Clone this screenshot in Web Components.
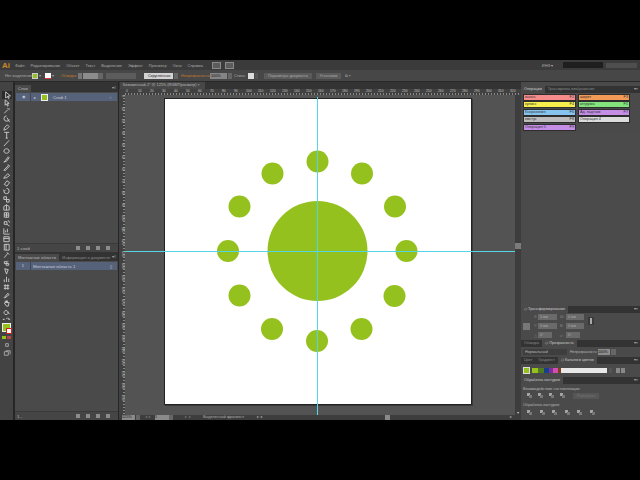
<!doctype html>
<html><head><meta charset="utf-8"><style>
html,body{margin:0;padding:0;background:#000;width:640px;height:480px;overflow:hidden}
body{font:5px "Liberation Sans",sans-serif;color:#bbb}
</style></head><body>
<ai-app></ai-app>
<script>
const def=(n,html,init)=>customElements.define(n,class extends HTMLElement{connectedCallback(){if(this.shadowRoot)return;const s=this.attachShadow({mode:'open'});s.innerHTML=typeof html==='function'?html(this):html;init&&init(s,this)}});
const tools=[
'M3 1v7l2-2 1 2.500 1-.5-1-2.500h2.500z','M3 1v6l1.500-1.500 1 2.500 1-.5-1-2.500h2z','M2 7l4-4M6 1v1M8 3h-1M7.500 1.500l-1 1','M4.500 1a3 3 0 1 0 3 4M5 3l3 5','M1.500 8l1-3 3-3 2 2-3 3z','M2 1.500h5.500M4.700 1.500v6.500M3.500 8h2.500','M1.500 8l6-6.500','M4.500 2a3 2.500 0 1 0 .1 0z','M1.500 8l2-2 3-4 1 1-3 4z','M1.500 8l5-5 1 1-5 5zM6 1.500l2 2','M2 7l4-4 2 2-4 3zM1 8h2','M2 6l3-4 3 2-3 4z','M4.500 1.500a3 3 0 1 1-3 3M1 3l1 1.500 1.500-1','M1.500 2h3v3h-3zM4.500 5h3v3h-3z','M1.500 8v-4l3-2 3 2v4zM4.500 2v6','M2 2h5v5h-5zM2 4.500h5M4.500 2v5','M2 3h3v3h-3zM5 6l3 2M6 2a2 2 0 0 1 2 2','M1.500 1.500v6.500h6.500M3.500 6v-2M5.500 6v-4','M1.500 2h6v5.500h-6zM1.500 4h6',
'M2 1.500h5.500v6.500h-5.500zM4 1.500v6.500','M2 7.500l4-5M5 1.500l2.500 2.500','M2 3h3v2h-3zM4 5h3v2h-3zM6 2v1',
'M2.500 2l4 1-2 5z','M2 8v-3M4.500 8v-6M7 8v-4','M1.500 3h6M1.500 6h6M3 1.500v6M6 1.500v6','M2 7.500l4-5 1.500 1.500-5 4z','M3 4v-1.500h1.500v1M4.500 3v-1h1v2M2 4.500l2.500 3.500h2l1-4h-5','M4 4a2.300 2.300 0 1 0 .1 0zM5.500 5.500l2.500 2.500'];
const paths=tools.map((d,i)=>`<svg class="${i==0?'sel':''}" viewBox="0 0 9 9" width="9" height="8" fill="none" stroke="#d0d0d0" stroke-width="1"><path d="${d}"/></svg>`).join('');

def('ai-menubar',`<style>:host{display:flex;align-items:center;height:10px;background:#3b3b3b;padding-left:2px;flex:none}
b{font:bold 8px "Liberation Sans";color:#c98a23;width:13px}
span{color:#aaa;font-size:3.900px;margin-right:6px;white-space:nowrap}
.ic{width:9px;height:7px;background:#5c5c5c;border:1px solid #8a8a8a;box-sizing:border-box;margin-right:4px}
.sp{flex:1}.q{width:40px;height:6px;background:#1e1e1e;margin:0 3px 0 9px}
.w{width:10.500px;height:5px;background:#4e4e4e}
</style><b>Ai</b><span>Файл</span><span>Редактирование</span><span>Объект</span><span>Текст</span><span>Выделение</span><span>Эффект</span><span>Просмотр</span><span>Окно</span><span>Справка</span>
<div class="ic" style="margin-left:3px"></div><div class="ic"></div><div class="sp"></div><span style="margin:0">ИНФ ▾</span><div class="q"></div><div class="w"></div><div class="w"></div><div class="w" style="margin-right:3px"></div>`);

def('ai-controlbar',`<style>:host{display:flex;align-items:center;height:12px;background:#474747;border-bottom:1px solid #2a2a2a;padding-left:5px;flex:none;box-sizing:border-box;white-space:nowrap;font-size:3.800px;color:#aaa}
i{display:block;height:6px;flex:none;font-style:normal;line-height:6px}
span{flex:none}
.o{color:#c47a2a}</style>
<span style="width:27px">Нет выделения</span><i style="width:6px;background:#95c11f;border:.5px solid #ccc;box-sizing:border-box"></i><span style="width:7px;padding-left:1px;box-sizing:border-box">▾</span>
<i style="width:6px;background:#fff;border-bottom:1px solid #d33;box-sizing:border-box"></i><span style="width:10px;padding-left:1px;box-sizing:border-box">▾</span>
<span class="o" style="width:17px">Обводка:</span><i style="width:4px;background:#777;margin-right:1px"></i><i style="width:15px;background:#8c8c8c"></i><i style="width:5px;background:#666;margin-right:3px"></i>
<i style="width:30px;background:#5c5c5c;margin-right:8px"></i>
<i style="width:29px;background:#d4d4d4;color:#222;padding-left:4px;box-sizing:border-box">Скруглённая</i><i style="width:4px;background:#666;margin:0 3px 0 1px"></i>
<span class="o" style="width:29px">Непрозрачность:</span><i style="width:17px;background:#858585;color:#111;padding-left:1px;box-sizing:border-box">100%</i><i style="width:4px;background:#666;margin:0 2px 0 1px"></i>
<span style="width:14px">Стиль:</span><i style="width:6px;background:#ddd"></i><i style="width:3px;background:#555;margin:0 6px 0 1px"></i>
<i style="width:48px;background:#5a5a5a;text-align:center;margin-right:4px">Параметры документа</i>
<i style="width:25px;background:#5a5a5a;text-align:center;margin-right:4px">Установки</i>
<span>⧉ ▾</span>`);

def('ai-toolbar',`<style>:host{display:flex;flex-direction:column;align-items:center;width:13px;flex:none;background:#434343;border-right:2px solid #262626;padding-top:9px}
.t{display:grid;grid-auto-rows:8px;justify-items:center;align-items:center}
.sel{background:#2b2b2b;width:10px}
.c{position:relative;width:11px;height:12px;margin-top:1px}
.f{position:absolute;left:1px;top:0;width:7px;height:7px;background:#95c11f;border:.5px solid #eee}
.s{position:absolute;left:5px;top:5px;width:6px;height:6px;background:#fff;border:1px solid #c22;box-sizing:border-box}
.m{display:flex;gap:1px;margin-top:1px}.m i{display:block;width:4px;height:3px;background:#95c11f}.m i+i{background:#b44}
</style><div class="t" id="t">${paths}</div>
<div class="t" style="grid-auto-rows:7px;color:#ddd;font-size:5px"><span>▪ ↷</span></div>
<div class="c"><div class="f"></div><div class="s"></div></div><div class="m"><i></i><i></i></div>
<div class="t" style="margin-top:2px">${`<svg viewBox="0 0 9 9" width="8" height="8" fill="none" stroke="#c4c4c4" stroke-width=".8"><path d="M3 3h3v3h-3z"/></svg><svg viewBox="0 0 9 9" width="8" height="8" fill="none" stroke="#c4c4c4" stroke-width=".8"><path d="M1.500 3h4.500v4h-4.500zM3 2h5v4"/></svg>`}</div>`);

def('ai-panel',h=>`<style>:host{display:flex;flex-direction:column;min-height:0;background:#4a4a4a}
.tabs{display:flex;height:9px;background:#333;flex:none;align-items:flex-end;font-size:4px;color:#8c8c8c;position:relative;white-space:nowrap}
.tabs span{padding:0 3px;height:7px;line-height:7px}.tabs span:first-child{background:#4a4a4a;color:#bbb}
.tabs u{position:absolute;right:2px;top:2px;text-decoration:none;color:#aaa;font-size:4px}
.body{flex:1;min-height:0;padding:1px 1px}
.foot{height:8px;flex:none;display:flex;align-items:center;padding:0 8px 0 2px;gap:6px;font-size:4.200px;background:#454545;border-top:1px solid #3a3a3a}
.foot i{display:block;width:4px;height:4px;background:#8c8c8c}.foot span{flex:1}
</style><div class="tabs"><span>${h.getAttribute('a')}</span>${h.getAttribute('b')?`<span>${h.getAttribute('b')}</span>`:''}<u>▾≡</u></div>
<div class="body"><slot></slot></div>
<div class="foot"><span>${h.getAttribute('foot')}</span><i></i><i></i><i></i><i></i></div>`);

def('ai-row',h=>`<style>:host{display:flex;align-items:center;height:8px;background:#566279;color:#ccd;font-size:4.200px;white-space:nowrap}
.a{width:14px;text-align:center;border-right:1px solid #3f4656;height:8px;line-height:8px;flex:none}
.b{flex:1;padding-left:${h.getAttribute('sw')?'3':'2'}px;display:flex;align-items:center;gap:5px}
.sw{width:5px;height:5px;background:#95c11f;border:1px solid #eee}
.c{width:13px;text-align:center;flex:none}</style>
<div class="a">${h.getAttribute('n')}</div><div class="b">${h.getAttribute('sw')?'▸ <i class="sw"></i>':''}<span>${h.getAttribute('t')}</span></div><div class="c">${h.getAttribute('e')}</div>`);

def('ai-leftcol',`<style>:host{display:flex;flex-direction:column;width:103px;flex:none;border-right:1px solid #262626;background:#333;padding-top:1px}</style>
<ai-panel a="Слои" foot="1 слой" style="flex:0 0 169px"><ai-row n="◉" sw="1" t="Слой 1" e="○"></ai-row></ai-panel>
<ai-panel a="Монтажные области" b="Информация о документе" foot="1..." style="flex:1"><ai-row n="1" t="Монтажная область 1" e="▯"></ai-row></ai-panel>`);

def('ai-ruler',h=>{const v=h.hasAttribute('v');const n=[];for(let i=0;i<(v?26:33);i++)n.push(`<span>${i*10}</span>`);
return `<style>:host{display:flex;flex:none;background-color:#414141;color:#c4c4c4;font-size:3.300px;overflow:hidden;white-space:nowrap;
${v?`width:6px;flex-direction:column;background-image:repeating-linear-gradient(#888 0 1px,transparent 1px 3px);background-size:2px 100%;background-position:100% 0;background-repeat:no-repeat`:`height:6px;background-image:repeating-linear-gradient(90deg,#888 0 1px,transparent 1px 3px);background-size:100% 2px;background-position:0 100%;background-repeat:no-repeat`}}
span{flex:none;${v?'height:12px;writing-mode:vertical-rl;line-height:4px':'width:12px;padding-left:1px;box-sizing:border-box;line-height:4px'}}</style>${n.join('')}`});

def('ai-canvas',`<style>:host{position:relative;display:block;flex:1;min-width:0;background:#535353;overflow:hidden}
.ab{position:absolute;left:39px;top:3px;width:306px;height:305px;background:#fff;border:1px solid #222;box-shadow:1px 1px 0 #3a3a3a}
svg{position:absolute;left:0;top:0}
</style><div class="ab"></div>
<svg width="390" height="320" viewBox="125 95 390 320">
<g fill="#95c11f"><circle cx="317.500" cy="251" r="50"/>
<circle cx="317.500" cy="161.500" r="11"/><circle cx="362" cy="173.500" r="11"/><circle cx="395" cy="206.500" r="11"/><circle cx="406.500" cy="251" r="11"/><circle cx="394.500" cy="296" r="11"/><circle cx="361.500" cy="329" r="11"/><circle cx="317" cy="341" r="11"/><circle cx="272" cy="329" r="11"/><circle cx="239.500" cy="295.500" r="11"/><circle cx="228" cy="251" r="11"/><circle cx="239.500" cy="206.500" r="11"/><circle cx="272.500" cy="173.500" r="11"/></g>
<path d="M317.500 97v318M125 251.500h390" stroke="#55d5e5" stroke-width="1" fill="none"/></svg>`);

def('ai-statusbar',`<style>:host{display:flex;align-items:center;height:5px;background:#3d3d3d;font-size:3.800px;color:#aaa;flex:none;white-space:nowrap;padding-left:3px}
i{display:block;height:5px;flex:none;font-style:normal;line-height:5px}
span{flex:none;line-height:5px}</style>
<i style="width:13px;background:#8a8a8a;color:#222">125%</i><i style="width:4px;background:#666;margin:0 0 0 1px"></i><span style="width:15px;text-align:center;color:#777">◂ ◂</span>
<i style="width:14px;background:#8a8a8a;color:#222">1</i><i style="width:4px;background:#666"></i><span style="width:30px;text-align:center;color:#777">▸ ▸</span>
<span style="width:54px">Выделенный фрагмент</span><span style="width:128px">▸ ◂</span><i style="width:5px;background:#888"></i><span style="flex:1"></span><span style="margin-right:9px">▸</span>`);

def('ai-document',`<style>:host{display:flex;flex-direction:column;flex:1;min-width:0;background:#333}
.tab{display:flex;height:7px;flex:none;font-size:3.800px;color:#bbb;align-items:center}
.tab span{background:#474747;height:7px;line-height:7px;padding:0 1px 0 3px;margin-left:1px;white-space:nowrap;width:85px;box-sizing:border-box}
.row{display:flex;flex:1;min-height:0}
.sb{width:6px;flex:none;background:#3d3d3d;display:flex;flex-direction:column;align-items:center;font-size:4px;color:#ccc}
.sb i{display:block;width:6px;height:6px;background:#7b7b7b;margin-top:148px}
.sb em{margin-top:auto;font-style:normal;line-height:5px}
.corner{width:6px;height:6px;background:#414141;flex:none}
.top{display:flex;flex:none}
</style><div class="tab"><span>Безымянный-1* @ 125% (RGB/Просмотр) ×</span></div>
<div class="top"><div class="corner"></div><ai-ruler style="flex:1"></ai-ruler></div>
<div class="row"><ai-ruler v></ai-ruler><ai-canvas></ai-canvas><div class="sb"><i></i><em>▾</em></div></div>
<ai-statusbar></ai-statusbar>`);

def('ai-swatch',h=>`<style>:host{display:flex;justify-content:space-between;align-items:center;height:5px;line-height:5px;padding:0 1px;background:${h.getAttribute('c')};color:#333;font-size:3.800px;border:.5px solid #2d2d2d;box-sizing:content-box;white-space:nowrap}</style><span><slot></slot></span><span>${h.getAttribute('k')||''}</span>`);

def('ai-tabs',h=>`<style>:host{display:flex;height:7px;background:#333;font-size:3.800px;color:#888;flex:none;position:relative;align-items:flex-end;white-space:nowrap}
span{padding:0 3px;height:7px;line-height:7px}.on{background:#4a4a4a;color:#ccc}
u{position:absolute;right:2px;top:1px;text-decoration:none;color:#aaa;line-height:5px}</style>${h.getAttribute('t').split('|').map((t,i)=>`<span class="${i==h.getAttribute('on')?'on':''}">${t}</span>`).join('')}<u>▾≡</u>`);

const sq='<svg width="7" height="7" viewBox="0 0 7 7" fill="#a4a4a4"><path d="M1 1h3v3h-3z"/><path d="M3 3h3v3h-3z" fill="#777"/></svg>';
def('ai-rightcol',`<style>:host{display:flex;flex-direction:column;width:119px;flex:none;background:#4a4a4a;color:#b5b5b5;font-size:3.800px;white-space:nowrap;padding:4px 0 3px;box-sizing:border-box}
.sw{display:grid;grid-template-columns:53px 52px;grid-auto-rows:6px;gap:1.400px 2px;padding:1px 2px 0 2px;align-content:start;flex:0 0 40px;box-sizing:border-box}
.fill{flex:1;background:#4b4b4b}
.tr{display:grid;grid-template-columns:11px 4px 19px 3px 6px 18px;grid-auto-rows:6px;row-gap:3px;padding:1px 0 0 2px;height:27px;align-items:center;color:#888;flex:none;box-sizing:border-box;position:relative}
.tr i{display:block;height:6px;background:#6a6a6a;font-style:normal;color:#aaa;padding-left:2px;font-size:3.600px;line-height:6px}
.link{position:absolute;left:67px;top:4px;width:6px;height:8px;background:#3a3a3a}
.link::after{content:"";position:absolute;left:2px;top:1px;width:2px;height:6px;background:#aaa}
.blend{display:flex;align-items:center;height:10px;padding:0 0 0 2px;flex:none}
.blend i{display:block;height:6px;font-style:normal;line-height:6px;flex:none}
.blend span{flex:none}
.cat{display:flex;align-items:center;height:13px;padding:0 2px;flex:none}
.cat b{display:block;height:5px;flex:none}
.lbl{padding:3px 0 0 2px;height:7px;flex:none;box-sizing:border-box;line-height:4px}
.ics{display:flex;gap:4px;padding:0 0 0 5px;height:9px;align-items:center;flex:none;box-sizing:border-box}
</style>
<ai-tabs t="Операции|Трассировка изображения" on="0"></ai-tabs>
<div class="sw">
<ai-swatch c="#f58b8b" k="F2">вьюга</ai-swatch><ai-swatch c="#f39a56" k="F3">ширит</ai-swatch>
<ai-swatch c="#f5ee4d" k="F4">кулисс</ai-swatch><ai-swatch c="#83e37c" k="F5">отгрузка</ai-swatch>
<ai-swatch c="#86c3ee" k="F6">Ксерокопия</ai-swatch><ai-swatch c="#c48ee6" k="F7">Ад. задтчки</ai-swatch>
<ai-swatch c="#bdbdbd" k="F8">кмстус</ai-swatch><ai-swatch c="#dcdcdc" k="">Операция 4</ai-swatch>
<ai-swatch c="#c48ee6" k="F9">Операция 5</ai-swatch>
</div>
<div class="fill"></div>
<ai-tabs t="◇ Трансформирование" on="0"></ai-tabs>
<div class="tr"><span></span><span>X:</span><i>0 мм</i><span></span><span>Ш:</span><i>0 мм</i>
<span style="width:7px;height:7px;background:#777"></span><span>Y:</span><i>0 мм</i><span></span><span>В:</span><i>0 мм</i>
<span></span><span>△</span><i style="width:12px">0°</i><span></span><span>▱</span><i style="width:12px">0°</i><div class="link"></div></div>
<ai-tabs t="Обводка|◇ Прозрачность" on="1"></ai-tabs>
<div class="blend"><i style="width:40px;background:#3e3e3e;padding-left:2px">Нормальный</i><i style="width:2px;background:#3e3e3e;margin-right:3px"></i><span style="width:28px;font-size:3.500px">Непрозрачность:</span><i style="width:12px;background:#8c8c8c;color:#111">100%</i><i style="width:5px;background:#666;margin-left:1px"></i></div>
<ai-tabs t="Цвет|Градиент|◇ Каталоги цветов" on="2"></ai-tabs>
<div class="cat"><b style="width:7px;height:7px;box-sizing:border-box;background:#95c11f;border:1px solid #ddd;margin-right:2px"></b>
<b style="background:#95c11f;width:6px"></b><b style="background:#4f7a1f;width:6px"></b><b style="background:#183f8e;width:5px"></b><b style="background:#7a2f9a;width:4px"></b><b style="background:#d24fb0;width:5px"></b><b style="background:#7d3f20;width:3px"></b><b style="background:#e8e8e8;width:46px"></b><b style="background:#555;width:3px;margin:0 4px 0 2px"></b><b style="background:#888;width:4px;margin-right:1px"></b><b style="background:#888;width:4px"></b></div>
<ai-tabs t="Обработка контуров" on="0"></ai-tabs>
<div class="lbl">Взаимодействие составляющих:</div>
<div class="ics">${sq}${sq}${sq}${sq}<span style="margin-left:3px;background:#565656;color:#777;padding:0 4px;line-height:6px">Разобрать</span></div>
<div class="lbl" style="height:8px">Обработка контуров:</div>
<div class="ics" style="gap:5.500px">${sq}${sq}${sq}${sq}${sq}${sq}</div>`);

def('ai-app',`<style>:host{position:absolute;left:0;top:60px;width:640px;height:360px;display:flex;flex-direction:column;background:#3b3b3b;overflow:hidden}
.main{display:flex;flex:1;min-height:0;background:#2c2c2c}
</style><ai-menubar></ai-menubar><ai-controlbar></ai-controlbar>
<div class="main"><ai-toolbar></ai-toolbar><ai-leftcol></ai-leftcol><ai-document></ai-document><ai-rightcol></ai-rightcol></div>`);
</script></body></html>
